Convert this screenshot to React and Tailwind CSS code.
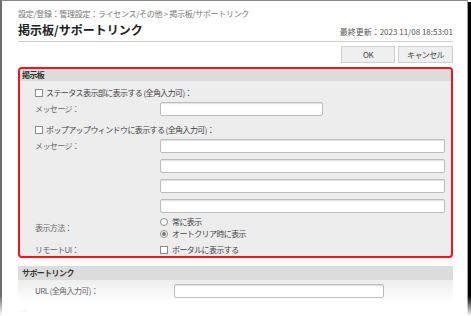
import React from 'react';

const font = { fontFamily: '"Noto Sans CJK JP", "Noto Sans", sans-serif' };

const Checkbox = () => (
  <span className="inline-block w-[8px] h-[8px] border border-[#8a8a8a] bg-white shrink-0" />
);

const Radio = ({ checked }) => (
  <span className="flex items-center justify-center w-[8px] h-[8px] rounded-full border border-[#8a8a8a] bg-white shrink-0">
    {checked && <span className="w-[4px] h-[4px] rounded-full bg-[#777]" />}
  </span>
);

const TextBox = ({ w }) => (
  <div className={`h-[14px] ${w} bg-white border border-[#bcbcbc] rounded-[2px] shadow-[inset_0_1px_1px_rgba(0,0,0,0.12)]`} />
);

export default function App() {
  return (
    <div className="relative w-[471px] h-[316px] overflow-hidden bg-white flex text-[8px] tracking-[-0.6px]" style={font}>
      {/* window content */}
      <div className="flex-1 border-t border-l-2 border-r border-t-[#8a8a8a] border-l-[#6f6f6f] border-r-[#9a9a9a] pl-[16px] pr-[14px] flex flex-col">
        <div className="pt-[7px] h-[19px] leading-[12px] text-[#777] tracking-[-0.3px]">
          設定/登録：管理設定：ライセンス/その他 &gt; 掲示板/サポートリンク
        </div>
        <div className="flex justify-between items-end h-[22px] border-b border-[#cfcfcf] pb-[1px]">
          <div className="text-[12px] font-bold leading-[20px] text-[#222] tracking-[0px]">掲示板/サポートリンク</div>
          <div className="leading-[14px] text-[#555] pb-[1px] tracking-[0px]">最終更新：2023 11/08 18:53:01</div>
        </div>
        <div className="flex justify-end gap-[3px] mt-[4px]">
          <button className="w-[54px] h-[17px] bg-[#efefef] border border-[#cfcfcf] text-[#444] leading-none">OK</button>
          <button className="w-[55px] h-[17px] bg-[#efefef] border border-[#cfcfcf] text-[#444] leading-none">キャンセル</button>
        </div>

        {/* 掲示板 */}
        <div className="mt-[4px] h-[191px] border-2 border-[#f0141e] rounded-[4px] bg-[#ededed] overflow-hidden flex flex-col">
          <div className="h-[12px] bg-[#dcdcdc] pl-[2px] leading-[12px] font-bold text-[#333]">掲示板</div>
          <div className="pl-[15px] pr-[6px] flex flex-col">
            <div className="mt-[5px] h-[14px] flex items-center gap-[3px] text-[#444]">
              <Checkbox />
              <span>ステータス表示部に表示する (全角入力可)：</span>
            </div>
            <div className="mt-[2px] flex items-center">
              <div className="w-[125px] text-[#666]">メッセージ：</div>
              <TextBox w="w-[163px]" />
            </div>
            <div className="mt-[7px] h-[14px] flex items-center gap-[3px] text-[#444]">
              <Checkbox />
              <span>ポップアップウィンドウに表示する (全角入力可)：</span>
            </div>
            <div className="mt-[2px] flex">
              <div className="w-[125px] h-[14px] leading-[14px] text-[#666]">メッセージ：</div>
              <div className="flex-1 flex flex-col gap-[6px]">
                <TextBox w="w-full" />
                <TextBox w="w-full" />
                <TextBox w="w-full" />
                <TextBox w="w-full" />
              </div>
            </div>
            <div className="mt-[3px] flex items-center">
              <div className="w-[125px] text-[#666]">表示方法：</div>
              <div className="flex flex-col">
                <div className="h-[12px] flex items-center gap-[4px] text-[#444]">
                  <Radio />
                  <span>常に表示</span>
                </div>
                <div className="h-[12px] flex items-center gap-[4px] text-[#444]">
                  <Radio checked />
                  <span>オートクリア時に表示</span>
                </div>
              </div>
            </div>
            <div className="mt-[4px] h-[12px] flex items-center">
              <div className="w-[125px] text-[#666]">リモートUI：</div>
              <div className="flex items-center gap-[4px] text-[#444]">
                <Checkbox />
                <span>ポータルに表示する</span>
              </div>
            </div>
          </div>
        </div>

        {/* サポートリンク */}
        <div className="mt-[8px] h-[14px] bg-[#dcdcdc] pl-[4px] leading-[14px] font-bold text-[#333]">サポートリンク</div>
        <div className="h-[22px] bg-linear-to-b from-[#ededed] to-white pl-[17px] pt-[4px] flex items-start">
          <div className="w-[139px] h-[14px] leading-[14px] text-[#666]">URL (全角入力可)：</div>
          <TextBox w="w-[210px]" />
        </div>
        <div className="mt-[8px] ml-[2px] w-[7px] h-[2px] bg-[#d8d8d8]" />
      </div>
      <div className="w-[3px] mt-[2px] bg-black" />

      {/* bottom fade of the cropped window */}
      <div className="absolute left-0 right-0 bottom-0 h-[20px] bg-linear-to-b from-white/0 to-white pointer-events-none" />
    </div>
  );
}
